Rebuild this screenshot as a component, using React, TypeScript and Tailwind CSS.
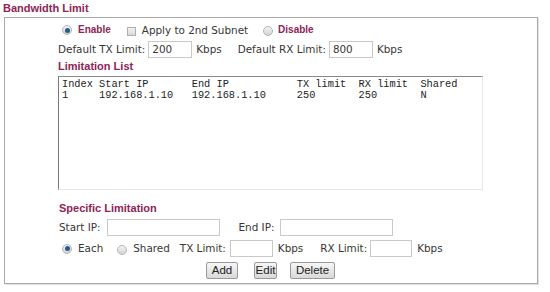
import React from 'react';

const txt = "font-['DejaVu_Sans',sans-serif] text-[10.4px] text-[#363636] leading-none whitespace-nowrap";
const boldTitle = "font-['Liberation_Sans',Arial,sans-serif] font-bold text-[11px] text-[#8e2456] leading-none whitespace-nowrap";

const Radio: React.FC<{ checked?: boolean }> = ({ checked }) => (
  <span className="inline-flex h-[10px] w-[10px] items-center justify-center rounded-full border border-[#b4b4b4] bg-gradient-to-b from-[#f4f4f4] to-[#d4d4d4]">
    {checked && <span className="h-[5px] w-[5px] rounded-full bg-[#2a5a8c]" />}
  </span>
);

const Checkbox: React.FC = () => (
  <span className="inline-block h-[9px] w-[9px] border border-[#b0b0b0] bg-gradient-to-b from-[#f2f2f2] to-[#d8d8d8]" />
);

const TextInput: React.FC<{ w: string; value?: string }> = ({ w, value }) => (
  <div className={`${w} flex h-[17px] items-center border border-[#c9c9c9] bg-white pl-[3px] ${txt}`}>
    {value}
  </div>
);

const Btn: React.FC<{ label: string; w: string }> = ({ label, w }) => (
  <div
    className={`${w} flex h-[17px] items-center justify-center rounded-[2px] border border-[#9a9a9a] bg-gradient-to-b from-[#f6f6f6] to-[#d9d9d9] font-['Liberation_Sans',Arial,sans-serif] text-[11.5px] leading-none text-[#222]`}
  >
    {label}
  </div>
);

const rows = [
  ['Index', 'Start IP', 'End IP', 'TX limit', 'RX limit', 'Shared'],
  ['1', '192.168.1.10', '192.168.1.10', '250', '250', 'N'],
];
const cols = [6, 15, 17, 10, 10, 6];

const pad = (s: string, n: number) => s + ' '.repeat(Math.max(0, n - s.length));

export default function App() {
  return (
    <div className="h-[292px] w-[550px] bg-white">
      <div className={`h-[17px] pl-[3px] pt-[3px] ${boldTitle}`}>Bandwidth Limit</div>

      <div className="ml-[4px] h-[267px] w-[534px] border border-[#a9a9a9] shadow-[1px_1px_0_#e2e2e2]">
        {/* enable row */}
        <div className="mt-[6px] flex h-[12px] items-center pl-[57px]">
          <Radio checked />
          <span className="ml-[6px] font-['Liberation_Sans',Arial,sans-serif] text-[10px] font-bold leading-none text-[#8e2456]">Enable</span>
          <span className="ml-[16px]"><Checkbox /></span>
          <span className={`ml-[6px] ${txt}`}>Apply to 2nd Subnet</span>
          <span className="ml-[15px]"><Radio /></span>
          <span className="ml-[5px] font-['Liberation_Sans',Arial,sans-serif] text-[10px] font-bold leading-none text-[#8e2456]">Disable</span>
        </div>

        {/* default limits */}
        <div className="mt-[5px] flex h-[17px] items-center pl-[53px]">
          <span className={txt}>Default TX Limit:</span>
          <span className="ml-[3px]"><TextInput w="w-[44px]" value="200" /></span>
          <span className={`ml-[4px] ${txt}`}>Kbps</span>
          <span className={`ml-[16px] ${txt}`}>Default RX Limit:</span>
          <span className="ml-[3px]"><TextInput w="w-[44px]" value="800" /></span>
          <span className={`ml-[4px] ${txt}`}>Kbps</span>
        </div>

        <div className={`mt-[3px] pl-[53px] ${boldTitle}`}>Limitation List</div>

        <div className="ml-[53px] mt-[4px] h-[114px] w-[425px] border-b border-l border-r border-t border-b-[#e6e6e6] border-l-[#7a7a7a] border-r-[#e6e6e6] border-t-[#8a8a8a] bg-white pl-[3px] pt-[2px]">
          {rows.map((r, i) => (
            <div
              key={i}
              className="h-[11px] whitespace-pre font-['Liberation_Mono','Courier_New',monospace] text-[10.3px] leading-[11px] text-[#222]"
            >
              {r.map((c, j) => pad(c, cols[j])).join('')}
            </div>
          ))}
        </div>

        <div className={`mt-[13px] pl-[54px] ${boldTitle}`}>Specific Limitation</div>

        {/* start / end ip */}
        <div className="mt-[5px] flex h-[17px] items-center pl-[54px]">
          <span className={txt}>Start IP:</span>
          <span className="ml-[6px]"><TextInput w="w-[113px]" /></span>
          <span className={`ml-[19px] ${txt}`}>End IP:</span>
          <span className="ml-[6px]"><TextInput w="w-[113px]" /></span>
        </div>

        {/* each / shared */}
        <div className="mt-[4px] flex h-[17px] items-center pl-[57px]">
          <Radio checked />
          <span className={`ml-[6px] ${txt}`}>Each</span>
          <span className="ml-[14px]"><Radio /></span>
          <span className={`ml-[6px] ${txt}`}>Shared</span>
          <span className={`ml-[10px] ${txt}`}>TX Limit:</span>
          <span className="ml-[4px]"><TextInput w="w-[43px]" /></span>
          <span className={`ml-[5px] ${txt}`}>Kbps</span>
          <span className={`ml-[17px] ${txt}`}>RX Limit:</span>
          <span className="ml-[3px]"><TextInput w="w-[42px]" /></span>
          <span className={`ml-[5px] ${txt}`}>Kbps</span>
        </div>

        <div className="mt-[5px] flex pl-[201px]">
          <Btn label="Add" w="w-[32px]" />
          <span className="ml-[16px]"><Btn label="Edit" w="w-[23px]" /></span>
          <span className="ml-[13px]"><Btn label="Delete" w="w-[45px]" /></span>
        </div>
      </div>
    </div>
  );
}
